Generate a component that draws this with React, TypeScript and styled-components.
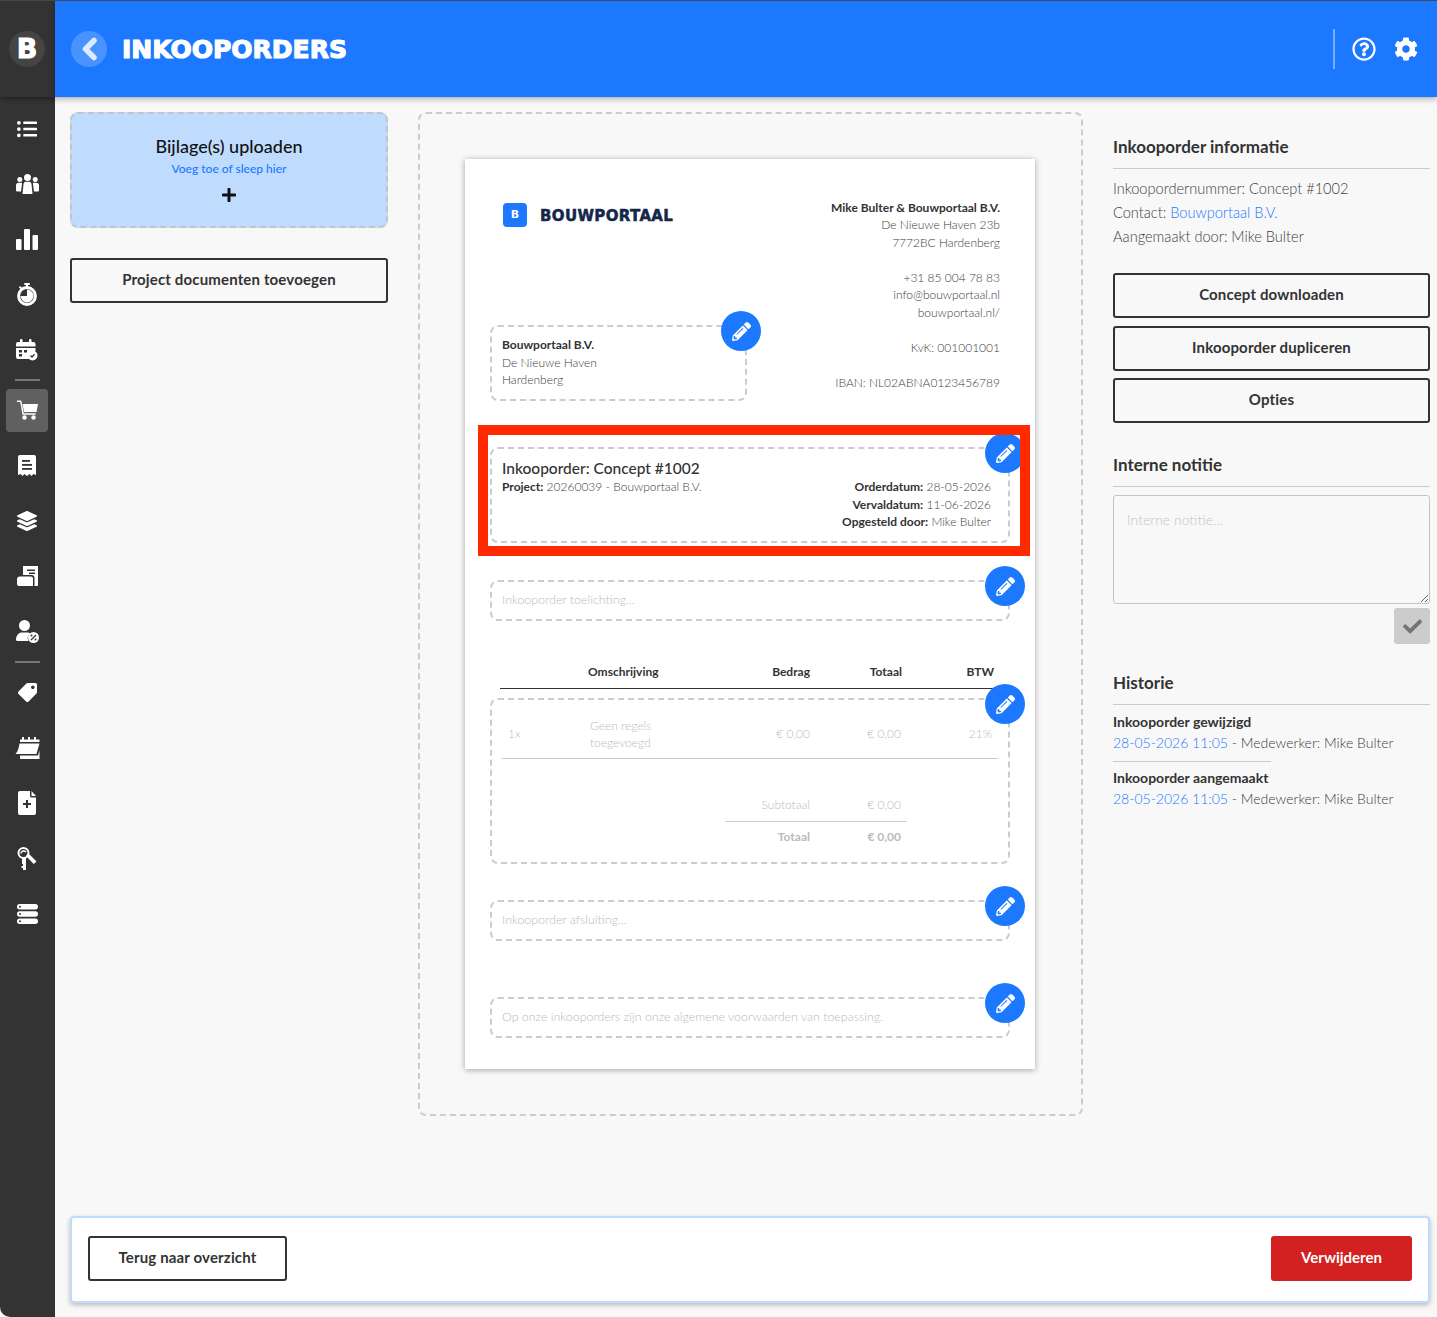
import styled, { createGlobalStyle } from "styled-components";
import {
  FaListUl,
  FaLayerGroup,
  FaTag,
  FaPencilAlt,
  FaCog,
  FaRegQuestionCircle,
  FaCheck,
  FaPlus,
} from "react-icons/fa";

const GlobalStyle = createGlobalStyle`
  html, body {
    margin: 0;
    padding: 0;
    background: #f8f8f8;
  }
  * {
    box-sizing: border-box;
  }
  body {
    font-family: "Lato", "Open Sans", sans-serif;
    color: #333;
  }
`;

const UsersIcon = () => (
  <svg width="23" height="20" viewBox="0 0 23 20" fill="#fff">
    <circle cx="11.500" cy="3.500" r="3.500" />
    <circle cx="3.800" cy="5.500" r="2.500" />
    <circle cx="19.200" cy="5.500" r="2.500" />
    <path d="M7.500 10a2.500 2.500 0 0 1 2.500-2.200h3a2.500 2.500 0 0 1 2.500 2.200l1 10H6.500z" />
    <path d="M0 11.500a2.800 2.800 0 0 1 2.800-2.800h2.700q.6 0 .6.500L5 17.500H1a1 1 0 0 1-1-1z" />
    <path d="M23 11.500a2.800 2.800 0 0 0-2.800-2.800h-2.700q-.6 0-.6.500l1.100 8.300h4a1 1 0 0 0 1-1z" />
  </svg>
);

const BarsIcon = () => (
  <svg width="22" height="21" viewBox="0 0 22 21" fill="#fff">
    <rect x="0" y="10" width="5.500" height="11" rx="1" />
    <rect x="8" y="0" width="6" height="21" rx="1" />
    <rect x="16.500" y="6" width="5.500" height="15" rx="1" />
  </svg>
);

const StopwatchIcon = () => (
  <svg width="20" height="23" viewBox="0 0 20 23" fill="#fff">
    <rect x="7" y="0" width="6" height="2" rx="1" />
    <rect x="9" y="1" width="2" height="3" />
    <path d="M3 3l2.500 2-1.200 1.400-2.400-2z" />
    <circle cx="10" cy="13" r="8.400" fill="none" stroke="#fff" strokeWidth="3" />
    <path d="M10 13V6.500a6.500 6.500 0 1 1-6.500 6.500z" />
  </svg>
);

const CalendarCheckIcon = () => (
  <svg width="22" height="22" viewBox="0 0 22 22" fill="#fff">
    <rect x="4" y="0" width="2.500" height="4" rx="1" />
    <rect x="13" y="0" width="2.500" height="4" rx="1" />
    <path d="M0 5a2 2 0 0 1 2-2h15.500a2 2 0 0 1 2 2v2.500H0z" />
    <path d="M0 9h19.500v3a6 6 0 0 0-6.500 8H2a2 2 0 0 1-2-2z" />
    <circle cx="16.500" cy="16.500" r="5" />
    <path d="M14.500 16.500l1.500 1.500 2.500-2.800" fill="none" stroke="#333" strokeWidth="1.300" />
    <rect x="3" y="11" width="3" height="2.500" fill="#333" />
    <rect x="8" y="11" width="3" height="2.500" fill="#333" />
    <rect x="3" y="15" width="3" height="2.500" fill="#333" />
  </svg>
);

const CartIcon = () => (
  <svg width="21" height="20" viewBox="0 0 21 20" fill="#fff">
    <path d="M0 .5h3.500a1 1 0 0 1 1 .8l2.200 12h12v1.500H5.500L3.200 2H0z" />
    <path d="M5.500 4H21l-1.500 8H7z" />
    <circle cx="7.500" cy="17.500" r="2.200" />
    <circle cx="16.500" cy="17.500" r="2.200" />
  </svg>
);

const ReceiptIcon = () => (
  <svg width="18" height="21" viewBox="0 0 18 21" fill="#fff">
    <path d="M2 0h14a2 2 0 0 1 2 2v18l-2.500-1-2 2-2-2-2.500 2-2.500-2-2 2-2-2L0 20V2a2 2 0 0 1 2-2z" />
    <rect x="4" y="5" width="8" height="1.800" fill="#333" />
    <rect x="4" y="9" width="10" height="1.800" fill="#333" />
    <rect x="4" y="13" width="10" height="1.800" fill="#333" />
  </svg>
);

const NewspaperIcon = () => (
  <svg width="21" height="20" viewBox="0 0 21 20" fill="#fff">
    <path d="M6 0h15v19a1 1 0 0 1-1 1h-2.500V12a3 3 0 0 0-3-3H6z" />
    <rect x="10" y="3.500" width="8" height="1.500" fill="#333" />
    <rect x="12" y="6.500" width="6" height="1.500" fill="#333" />
    <path d="M3 10.500h11a2 2 0 0 1 2 2V20H2a2 2 0 0 1-2-2v-4.500a3 3 0 0 1 3-3z" />
  </svg>
);

const UserPercentIcon = () => (
  <svg width="23" height="23" viewBox="0 0 23 23" fill="#fff">
    <circle cx="8.500" cy="5.500" r="5.500" />
    <path d="M0 20c0-5 3-7.500 6-7.500h5c1.500 0 2.500.5 3 1a6 6 0 0 0-1.500 7.500H1.500A1.500 1.500 0 0 1 0 20z" />
    <circle cx="17.500" cy="17.500" r="5.500" />
    <path d="M15 20l5-5" stroke="#333" strokeWidth="1.200" />
    <circle cx="15.500" cy="15.500" r="1" fill="#333" />
    <circle cx="19.500" cy="19.500" r="1" fill="#333" />
  </svg>
);

const CalendarTearIcon = () => (
  <svg width="25" height="22" viewBox="0 0 25 22" fill="#fff">
    <rect x="7" y="0" width="2" height="3" />
    <rect x="13" y="0" width="2" height="3" />
    <rect x="19" y="0" width="2" height="3" />
    <path d="M5 2.500h19.500V5H5z" />
    <path d="M4.500 6.500h20l-3 10.500H0.500q3-3 4-10.500z" />
    <path d="M5 18.500h18l1.500-5V22H5z" />
  </svg>
);

const FilePlusIcon = () => (
  <svg width="18" height="24" viewBox="0 0 18 24" fill="#fff">
    <path d="M2 0h10v5a1.500 1.500 0 0 0 1.500 1.500H18V22a2 2 0 0 1-2 2H2a2 2 0 0 1-2-2V2a2 2 0 0 1 2-2z" />
    <path d="M13.500 0L18 5h-4.500z" />
    <path d="M8 9h2v3h3v2h-3v3H8v-3H5v-2h3z" fill="#333" />
  </svg>
);

const KeysIcon = () => (
  <svg width="20" height="23" viewBox="0 0 20 23" fill="#fff">
    <circle cx="6.500" cy="6" r="5" fill="none" stroke="#fff" strokeWidth="2" />
    <path d="M4 6.500a2.800 2.800 0 0 1 5-1.500" fill="none" stroke="#fff" strokeWidth="1.500" />
    <path d="M5 10h4v13H6v-2H4.500v-2H6v-2H5z" />
    <path d="M11 6l8.500 8.500-2.800 2.500L9 9z" />
  </svg>
);

const ServerIcon = () => (
  <svg width="21" height="20" viewBox="0 0 21 20" fill="#fff">
    <rect x="0" y="0" width="21" height="5.500" rx="2.700" />
    <rect x="0" y="7.200" width="21" height="5.500" rx="2.700" />
    <rect x="0" y="14.500" width="21" height="5.500" rx="2.700" />
    <circle cx="3" cy="2.750" r="1" fill="#333" />
    <circle cx="3" cy="9.950" r="1" fill="#333" />
    <circle cx="3" cy="17.250" r="1" fill="#333" />
  </svg>
);

const BackChevron = () => (
  <svg width="17" height="24" viewBox="0 0 17 24" fill="none">
    <path d="M13 3.500L4.500 12l8.500 8.500" stroke="#dcebff" strokeWidth="5.500" strokeLinecap="round" strokeLinejoin="round" />
  </svg>
);

const Page = styled.div`
  display: grid;
  grid-template-columns: 55px 1fr;
  width: 100%;
  height: 1317px;
  overflow: hidden;
  border-top: 1px solid #3d4a55;
`;

const Sidebar = styled.aside`
  background: #333;
  border-bottom-left-radius: 10px;
  display: flex;
  flex-direction: column;
`;

const LogoCell = styled.div`
  height: 96px;
  display: flex;
  align-items: center;
  justify-content: center;
  padding-right: 1px;
  box-shadow: 0 2px 5px rgba(0, 0, 0, 0.35);
`;

const LogoRound = styled.div`
  width: 36px;
  height: 36px;
  border-radius: 50%;
  background: #444;
  color: #fff;
  font-family: "DejaVu Sans", sans-serif;
  font-weight: 700;
  font-size: 27px;
  line-height: 36px;
  text-align: center;
  -webkit-text-stroke: 1px #fff;
`;

const Nav = styled.nav`
  display: flex;
  flex-direction: column;
  padding: 4px 1px 0 0;
`;

const NavItem = styled.div`
  height: 55.3px;
  display: flex;
  align-items: center;
  justify-content: center;
  color: #fff;
`;

const NavTile = styled.div<{ $active?: boolean }>`
  width: 42px;
  height: 43px;
  border-radius: 4px;
  display: flex;
  align-items: center;
  justify-content: center;
  background: ${(p) => (p.$active ? "#606060" : "transparent")};
`;

const NavDivider = styled.div<{ $tight?: boolean }>`
  width: 25px;
  height: 2px;
  background: #777;
  margin: 2px auto ${(p) => (p.$tight ? "1px" : "2px")} 15px;
`;

const Main = styled.main`
  display: flex;
  flex-direction: column;
  min-width: 0;
`;

const Header = styled.header`
  height: 96px;
  background: #1c78ff;
  display: flex;
  align-items: center;
  padding: 0 19px 0 16px;
  box-shadow: 0 2px 6px rgba(0, 0, 0, 0.3);
  color: #fff;
`;

const BackRound = styled.div`
  width: 36px;
  height: 36px;
  border-radius: 50%;
  background: rgba(255, 255, 255, 0.2);
  display: flex;
  align-items: center;
  justify-content: center;
  margin-right: 15px;
`;

const PageTitle = styled.h1`
  margin: 0;
  font-family: "DejaVu Sans", sans-serif;
  font-weight: 700;
  font-size: 25px;
  letter-spacing: 0;
  -webkit-text-stroke: 1.200px #fff;
  flex: 1;
`;

const HeaderDivider = styled.div`
  width: 2px;
  height: 40px;
  background: rgba(255, 255, 255, 0.4);
`;

const HeaderIcons = styled.div`
  display: flex;
  gap: 18px;
  margin-left: 17px;
`;

const Content = styled.div`
  flex: 1;
  display: grid;
  grid-template-columns: 318px 665px 317px;
  column-gap: 30px;
  padding: 15px 7px 0 15px;
  align-items: start;
`;

const Column = styled.div`
  display: flex;
  flex-direction: column;
`;

const Upload = styled.div`
  height: 116px;
  background: #bfdcff;
  border: 2px dashed #c4c4c4;
  border-radius: 8px;
  display: flex;
  flex-direction: column;
  align-items: center;
  padding-top: 22px;
  color: #111;
  margin-bottom: 30px;
`;

const UploadTitle = styled.div`
  font-size: 18px;
  font-weight: 500;
  line-height: 20px;
`;

const UploadSub = styled.div`
  font-size: 12px;
  font-weight: 500;
  line-height: 16px;
  margin-top: 5px;
  margin-bottom: 10px;
  color: #1c78ff;
`;

const OutlineButton = styled.button<{ $width?: string }>`
  width: ${(p) => p.$width || "100%"};
  height: 45px;
  background: transparent;
  border: 2px solid #333;
  border-radius: 3px;
  font-family: inherit;
  font-size: 15px;
  font-weight: 700;
  letter-spacing: 0.15px;
  color: #333;
  padding: 0 0 3px;
`;

const RedButton = styled.button`
  width: 141px;
  height: 45px;
  background: #d32121;
  border: 0;
  border-radius: 3px;
  font-family: inherit;
  font-size: 15px;
  font-weight: 700;
  color: #fff;
  padding: 0 0 3px;
`;

const Canvas = styled.div`
  height: 1004px;
  border: 2px dashed #ccc;
  border-radius: 8px;
  padding: 45px;
  display: flex;
  justify-content: flex-start;
`;

const Paper = styled.div`
  position: relative;
  width: 570px;
  height: 910px;
  background: #fff;
  box-shadow: 0 1px 6px rgba(0, 0, 0, 0.35);
  padding: 40px 25px 0;
  display: flex;
  flex-direction: column;
  font-size: 12px;
  line-height: 17.5px;
  font-weight: 300;
  color: #3d3d3d;
`;

const HighlightFrame = styled.div`
  position: absolute;
  left: 13px;
  top: 266px;
  width: 552px;
  height: 131px;
  border: 10px solid #ff2a00;
  pointer-events: none;
`;

const PaperHead = styled.div`
  display: flex;
  justify-content: space-between;
  padding-right: 10px;
`;

const PaperLeft = styled.div`
  display: flex;
  flex-direction: column;
  width: 257px;
`;

const BrandRow = styled.div`
  display: flex;
  align-items: center;
  margin: 4px 0 0 13px;
  height: 24px;
`;

const BrandMark = styled.div`
  width: 24px;
  height: 24px;
  border-radius: 4px;
  background: #1c78ff;
  color: #fff;
  font-family: "DejaVu Sans", sans-serif;
  font-weight: 700;
  font-size: 11px;
  line-height: 24px;
  text-align: center;
  margin-right: 13px;
`;

const BrandName = styled.div`
  font-family: "DejaVu Sans", sans-serif;
  font-weight: 700;
  font-size: 15px;
  letter-spacing: 0.35px;
  padding-top: 3px;
  color: #14264a;
  -webkit-text-stroke: 0.5px #14264a;
`;

const AddressBox = styled.div`
  position: relative;
  margin-top: 98px;
  height: 76px;
  border: 2px dashed #ccc;
  border-radius: 8px;
  padding: 9px 10px;
`;

const CompanyInfo = styled.div`
  text-align: right;
  margin-top: -0.5px;
`;

const Gap = styled.div`
  height: 17.5px;
`;

const Strong = styled.span`
  font-weight: 700;
  color: #333;
`;

const Section = styled.div<{ $top: number; $height: number }>`
  position: relative;
  margin-top: ${(p) => p.$top}px;
  height: ${(p) => p.$height}px;
  border: 2px dashed #ccc;
  border-radius: 8px;
  padding: 9px 10px;
`;

const Placeholder = styled.div`
  color: #bbb;
  font-size: 12.400px;
`;

const OrderTitle = styled.div`
  font-size: 15.500px;
  font-weight: 500;
  line-height: 19px;
  color: #333;
  padding-top: 1px;
`;

const OrderRow = styled.div`
  display: flex;
  justify-content: space-between;
  padding-right: 7px;
`;

const RightText = styled.div`
  text-align: right;
`;

const PencilRound = styled.div<{ $right: number }>`
  position: absolute;
  top: -16px;
  right: ${(p) => p.$right}px;
  width: 40px;
  height: 40px;
  border-radius: 50%;
  background: #1c78ff;
  display: flex;
  align-items: center;
  justify-content: center;
  color: #fff;
`;

const TableHead = styled.div`
  margin: 40px 10px 0;
  display: grid;
  grid-template-columns: 88px 134px 88px 92px 92px 6px;
  height: 28px;
  line-height: 22px;
  border-bottom: 1px solid #333;
  font-weight: 700;
  color: #333;
`;

const Cell = styled.div<{ $right?: boolean }>`
  text-align: ${(p) => (p.$right ? "right" : "left")};
`;

const LinesBox = styled(Section)`
  padding: 16px 10px 0;
  color: #bbb;
`;

const LineRow = styled.div`
  display: grid;
  grid-template-columns: 82px 130px 90px 91px 91px;
  align-items: center;
  padding: 0 6px 6px;
  height: 43px;
  border-bottom: 1px solid #ccc;
`;

const Totals = styled.div`
  width: 182px;
  margin: 37px 0 0 223px;
`;

const TotalRow = styled.div<{ $last?: boolean }>`
  display: grid;
  grid-template-columns: 85px 91px;
  padding: ${(p) => (p.$last ? "6px 0 0" : "0 0 7px")};
  border-bottom: ${(p) => (p.$last ? "0" : "1px solid #ccc")};
  font-weight: ${(p) => (p.$last ? 700 : 300)};
`;

const SideTitle = styled.h2<{ $top: number }>`
  margin: ${(p) => p.$top}px 0 0;
  height: 42px;
  font-size: 17px;
  font-weight: 700;
  line-height: 20px;
  color: #333;
  padding: 10px 0 0;
  border-bottom: 1px solid #ccc;
`;

const InfoList = styled.div`
  margin-top: 8px;
  margin-bottom: 24px;
  font-size: 14.600px;
  font-weight: 300;
  line-height: 24px;
  color: #3d3d3d;
`;

const Link = styled.span`
  color: #1c78ff;
`;

const ButtonStack = styled.div`
  display: flex;
  flex-direction: column;
  gap: 7.5px;
`;

const NoteArea = styled.textarea`
  display: block;
  width: 100%;
  height: 109px;
  margin-top: 8px;
  background: transparent;
  border: 1px solid #c4c4c4;
  border-radius: 3px;
  padding: 15px 13px;
  font-family: inherit;
  font-size: 14px;
  font-weight: 300;
  &::placeholder {
    color: #c4c4c4;
    opacity: 1;
  }
`;

const SaveRow = styled.div`
  display: flex;
  justify-content: flex-end;
  margin-top: 4px;
`;

const SaveButton = styled.div`
  width: 36px;
  height: 36px;
  border-radius: 3px;
  background: #ccc;
  color: #757575;
  display: flex;
  align-items: center;
  justify-content: center;
`;

const HistoryItem = styled.div`
  font-size: 14px;
  font-weight: 300;
  line-height: 20.5px;
  color: #3d3d3d;
`;

const HistoryFirst = styled(HistoryItem)`
  margin-top: 7px;
  padding-bottom: 8px;
  width: 158px;
  white-space: nowrap;
  border-bottom: 1px solid #ccc;
`;

const HistoryNext = styled(HistoryItem)`
  margin-top: 6px;
`;

const FooterBar = styled.footer`
  margin: 0 7px 14px 15px;
  height: 87px;
  background: #fff;
  border: 2px solid #bfdcff;
  border-radius: 4px;
  box-shadow: 0 2px 5px rgba(0, 0, 0, 0.25);
  display: flex;
  align-items: center;
  justify-content: space-between;
  padding: 0 16px 2px;
`;

const Pencil = ({ right = -17 }: { right?: number }) => (
  <PencilRound $right={right}>
    <FaPencilAlt size={19} />
  </PencilRound>
);

const navTop = [
  <FaListUl size={20} />,
  <UsersIcon />,
  <BarsIcon />,
  <StopwatchIcon />,
  <CalendarCheckIcon />,
];

const navMiddle = [<ReceiptIcon />, <FaLayerGroup size={20} />, <NewspaperIcon />, <UserPercentIcon />];

const navBottom = [<CalendarTearIcon />, <FilePlusIcon />, <KeysIcon />, <ServerIcon />];

export default function App() {
  return (
    <>
      <GlobalStyle />
      <Page>
        <Sidebar>
          <LogoCell>
            <LogoRound>B</LogoRound>
          </LogoCell>
          <Nav>
            {navTop.map((icon, i) => (
              <NavItem key={i}>{icon}</NavItem>
            ))}
            <NavDivider $tight />
            <NavItem>
              <NavTile $active>
                <CartIcon />
              </NavTile>
            </NavItem>
            {navMiddle.map((icon, i) => (
              <NavItem key={i}>{icon}</NavItem>
            ))}
            <NavDivider />
            <NavItem>
              <FaTag size={19} transform="rotate(90)" />
            </NavItem>
            {navBottom.map((icon, i) => (
              <NavItem key={i}>{icon}</NavItem>
            ))}
          </Nav>
        </Sidebar>
        <Main>
          <Header>
            <BackRound>
              <BackChevron />
            </BackRound>
            <PageTitle>INKOOPORDERS</PageTitle>
            <HeaderDivider />
            <HeaderIcons>
              <FaRegQuestionCircle size={24} />
              <FaCog size={24} />
            </HeaderIcons>
          </Header>
          <Content>
            <Column>
              <Upload>
                <UploadTitle>Bijlage(s) uploaden</UploadTitle>
                <UploadSub>Voeg toe of sleep hier</UploadSub>
                <FaPlus size={16} />
              </Upload>
              <OutlineButton>Project documenten toevoegen</OutlineButton>
            </Column>
            <Canvas>
              <Paper>
                <PaperHead>
                  <PaperLeft>
                    <BrandRow>
                      <BrandMark>B</BrandMark>
                      <BrandName>BOUWPORTAAL</BrandName>
                    </BrandRow>
                    <AddressBox>
                      <Strong>Bouwportaal B.V.</Strong>
                      <br />
                      De Nieuwe Haven
                      <br />
                      Hardenberg
                      <Pencil right={-16} />
                    </AddressBox>
                  </PaperLeft>
                  <CompanyInfo>
                    <Strong>Mike Bulter &amp; Bouwportaal B.V.</Strong>
                    <br />
                    De Nieuwe Haven 23b
                    <br />
                    7772BC Hardenberg
                    <Gap />
                    +31 85 004 78 83
                    <br />
                    info@bouwportaal.nl
                    <br />
                    bouwportaal.nl/
                    <Gap />
                    KvK: 001001001
                    <Gap />
                    IBAN: NL02ABNA0123456789
                  </CompanyInfo>
                </PaperHead>
                <Section $top={46} $height={96}>
                  <OrderTitle>Inkooporder: Concept #1002</OrderTitle>
                  <OrderRow>
                    <div>
                      <Strong>Project:</Strong> 20260039 - Bouwportaal B.V.
                    </div>
                    <RightText>
                      <Strong>Orderdatum:</Strong> 28-05-2026
                      <br />
                      <Strong>Vervaldatum:</Strong> 11-06-2026
                      <br />
                      <Strong>Opgesteld door:</Strong> Mike Bulter
                    </RightText>
                  </OrderRow>
                  <Pencil />
                </Section>
                <Section $top={37} $height={41}>
                  <Placeholder>Inkooporder toelichting...</Placeholder>
                  <Pencil />
                </Section>
                <TableHead>
                  <span />
                  <Cell>Omschrijving</Cell>
                  <Cell $right>Bedrag</Cell>
                  <Cell $right>Totaal</Cell>
                  <Cell $right>BTW</Cell>
                </TableHead>
                <LinesBox $top={9} $height={166}>
                  <LineRow>
                    <Cell>1x</Cell>
                    <Cell>
                      Geen regels
                      <br />
                      toegevoegd
                    </Cell>
                    <Cell $right>€ 0,00</Cell>
                    <Cell $right>€ 0,00</Cell>
                    <Cell $right>21%</Cell>
                  </LineRow>
                  <Totals>
                    <TotalRow>
                      <Cell $right>Subtotaal</Cell>
                      <Cell $right>€ 0,00</Cell>
                    </TotalRow>
                    <TotalRow $last>
                      <Cell $right>Totaal</Cell>
                      <Cell $right>€ 0,00</Cell>
                    </TotalRow>
                  </Totals>
                  <Pencil />
                </LinesBox>
                <Section $top={36} $height={41}>
                  <Placeholder>Inkooporder afsluiting...</Placeholder>
                  <Pencil />
                </Section>
                <Section $top={56} $height={41}>
                  <Placeholder>Op onze inkooporders zijn onze algemene voorwaarden van toepassing.</Placeholder>
                  <Pencil />
                </Section>
                <HighlightFrame />
              </Paper>
            </Canvas>
            <Column>
              <SideTitle $top={15}>Inkooporder informatie</SideTitle>
              <InfoList>
                Inkoopordernummer: Concept #1002
                <br />
                Contact: <Link>Bouwportaal B.V.</Link>
                <br />
                Aangemaakt door: Mike Bulter
              </InfoList>
              <ButtonStack>
                <OutlineButton>Concept downloaden</OutlineButton>
                <OutlineButton>Inkooporder dupliceren</OutlineButton>
                <OutlineButton>Opties</OutlineButton>
              </ButtonStack>
              <SideTitle $top={22}>Interne notitie</SideTitle>
              <NoteArea placeholder="Interne notitie..." />
              <SaveRow>
                <SaveButton>
                  <FaCheck size={19} />
                </SaveButton>
              </SaveRow>
              <SideTitle $top={19}>Historie</SideTitle>
              <HistoryFirst>
                <Strong>Inkooporder gewijzigd</Strong>
                <br />
                <Link>28-05-2026 11:05</Link> - Medewerker: Mike Bulter
              </HistoryFirst>
              <HistoryNext>
                <Strong>Inkooporder aangemaakt</Strong>
                <br />
                <Link>28-05-2026 11:05</Link> - Medewerker: Mike Bulter
              </HistoryNext>
            </Column>
          </Content>
          <FooterBar>
            <OutlineButton $width="199px">Terug naar overzicht</OutlineButton>
            <RedButton>Verwijderen</RedButton>
          </FooterBar>
        </Main>
      </Page>
    </>
  );
}
